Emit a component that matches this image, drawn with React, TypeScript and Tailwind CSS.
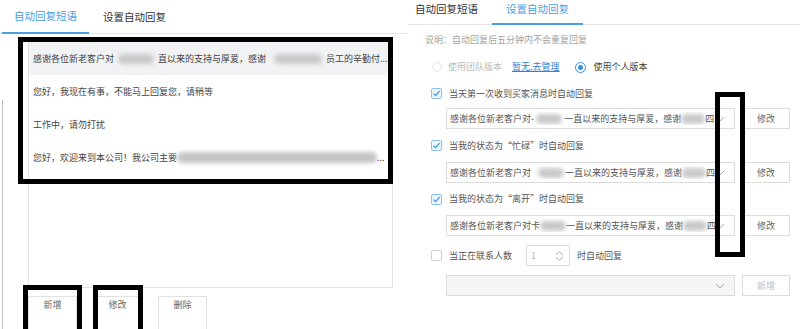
import React from 'react';

const Blur = ({ w, h = 10, c = '#c9c9c9' }: { w: number; h?: number; c?: string }) => (
    <span
        className="inline-block rounded-full blur-[2px] align-middle shrink-0"
        style={{ width: w, height: h, background: c }}
    />
);

const Check = ({ checked = false }: { checked?: boolean }) => (
    <span
        className={
            'flex items-center justify-center w-[11px] h-[11px] rounded-[2px] border ' +
            (checked ? 'border-[#8ec1ea] bg-[#eef6fd]' : 'border-[#cfcfcf] bg-white')
        }
    >
        {checked && (
            <svg width="9" height="9" viewBox="0 0 9 9" fill="none">
                <path d="M1.5 4.6 L3.6 6.6 L7.6 2.2" stroke="#3a8fd8" strokeWidth="1.2" />
            </svg>
        )}
    </span>
);

const Chevron = () => (
    <svg width="10" height="6" viewBox="0 0 10 6" fill="none" className="shrink-0">
        <path d="M1 1 L5 5 L9 1" stroke="#a9a9a9" strokeWidth="1" />
    </svg>
);

function SelectRow({ disabled = false, btn, children }: { disabled?: boolean; btn: string; children?: React.ReactNode }) {
    return (
        <div className="flex items-center h-[21px] ml-[38px]">
            <div
                className={
                    'flex items-center w-[289px] h-[21px] border border-[#dcdcdc] pl-[3px] pr-[9px] ' +
                    (disabled ? 'bg-[#f5f5f5]' : 'bg-white')
                }
            >
                <div className="flex-1 flex items-center overflow-hidden whitespace-nowrap text-[9px] text-[#555]">
                    {children}
                </div>
                <Chevron />
            </div>
            <button
                className={
                    'ml-[7px] w-[48px] h-[21px] border border-[#dcdcdc] bg-white text-[9px] ' +
                    (disabled ? 'text-[#c0c0c0]' : 'text-[#666]')
                }
            >
                {btn}
            </button>
        </div>
    );
}

function CheckRow({ h, checked, label }: { h: number; checked: boolean; label: string }) {
    return (
        <div className="flex items-center gap-[7px] pl-[23px]" style={{ height: h }}>
            <Check checked={checked} />
            <span className="text-[9px] text-[#555]">{label}</span>
        </div>
    );
}

function LeftPanel() {
    const rows: React.ReactNode[] = [
        <>
            感谢各位新老客户对<span className="w-[4px]" /><Blur w={36} /><span className="w-[4px]" />直以来的支持与厚爱，感谢<span className="w-[8px]" /><Blur w={48} /><span className="w-[4px]" />员工的辛勤付...
        </>,
        <>您好，我现在有事，不能马上回复您，请稍等</>,
        <>工作中，请勿打扰</>,
        <>
            您好，欢迎来到本公司！我公司主要<Blur w={200} h={11} c="#c4c4c4" />...
        </>,
    ];
    return (
        <div className="w-[400px] h-full flex flex-col">
            <div className="flex h-[34px] border-b border-[#e6e6e6] pl-[2px]">
                <div className="w-[87px] h-[34px] -mb-px border-b-2 border-[#4aa0df] flex items-center justify-center text-[10.5px] text-[#4aa0df]">
                    自动回复短语
                </div>
                <div className="w-[91px] h-[33px] flex items-center justify-center text-[10.5px] text-[#333]">
                    设置自动回复
                </div>
            </div>
            <div className="flex flex-1">
                <div className="w-[3px] mt-[66px] border-r border-[#bdbdbd]" />
                <div className="flex flex-col ml-[25px]">
                    <div className="mt-[7px] w-[365px] h-[247px] border border-[#e3e3e3] flex flex-col">
                        {rows.map((r, i) => (
                            <div
                                key={i}
                                className={
                                    'h-[33px] px-[4px] flex items-center whitespace-nowrap overflow-hidden text-[9px] text-[#444] ' +
                                    (i === 0 ? 'bg-[#f1f2f4]' : '')
                                }
                            >
                                {r}
                            </div>
                        ))}
                    </div>
                    <div className="flex gap-[16px] mt-[8px]">
                        {['新增', '修改', '删除'].map(b => (
                            <button
                                key={b}
                                className="w-[49px] h-[34px] border border-[#e0e0e0] bg-white text-[9px] text-[#666] flex justify-center pt-[1px]"
                            >
                                {b}
                            </button>
                        ))}
                    </div>
                </div>
            </div>
        </div>
    );
}

function RightPanel() {
    return (
        <div className="w-[400px] h-full flex">
            <div className="w-[8px] h-[34px] border-b border-[#e6e6e6]" />
            <div className="flex-1 flex flex-col">
                <div className="flex h-[25px] border-b border-[#e6e6e6]">
                    <div className="w-[84px] pl-[7px] pt-[1px] text-[10.5px] text-[#333]">自动回复短语</div>
                    <div className="w-[91px] h-[25px] -mb-px border-b-2 border-[#4aa0df] pt-[1px] text-center text-[10.5px] text-[#4aa0df]">
                        设置自动回复
                    </div>
                </div>
                <div className="h-[30px] flex items-center pl-[17px] text-[9px] text-[#a3a3a3]">
                    说明：自动回复后五分钟内不会重复回复
                </div>
                <div className="h-[24px] flex items-center pl-[24px] text-[9px]">
                    <span className="w-[10px] h-[10px] rounded-full border border-[#e3e3e3]" />
                    <span className="ml-[6px] text-[#bcbcbc]">使用团队版本</span>
                    <span className="ml-[10px] text-[#2f83d3] underline">暂无,去管理</span>
                    <span className="ml-[15px] w-[11px] h-[11px] rounded-full border border-[#3a8fd8] flex items-center justify-center">
                        <span className="w-[5px] h-[5px] rounded-full bg-[#3a8fd8]" />
                    </span>
                    <span className="ml-[8px] text-[#444]">使用个人版本</span>
                </div>
                <CheckRow h={29} checked label="当天第一次收到买家消息时自动回复" />
                <SelectRow btn="修改">
                    感谢各位新老客户对-<span className="w-[2px]" /><Blur w={26} /><span className="w-[2px]" />一直以来的支持与厚爱，感谢<Blur w={24} />四
                </SelectRow>
                <CheckRow h={33} checked label="当我的状态为“忙碌”时自动回复" />
                <SelectRow btn="修改">
                    感谢各位新老客户对<span className="w-[14px]" /><Blur w={26} /><span className="w-[2px]" />一直以来的支持与厚爱，感谢<Blur w={24} />四
                </SelectRow>
                <CheckRow h={32} checked label="当我的状态为“离开”时自动回复" />
                <SelectRow btn="修改">
                    感谢各位新老客户对卡<Blur w={26} /><span className="w-[2px]" />一直以来的支持与厚爱，感谢<Blur w={24} />四
                </SelectRow>
                <div className="h-[39px] flex items-center pl-[23px] text-[9px] text-[#555]">
                    <Check />
                    <span className="ml-[7px]">当正在联系人数</span>
                    <div className="ml-[14px] w-[44px] h-[21px] border border-[#dcdcdc] flex items-center justify-between pl-[4px] pr-[5px] text-[#b5b5b5]">
                        <span>1</span>
                        <svg width="9" height="12" viewBox="0 0 9 12" fill="none">
                            <path d="M1 5 L4.5 1.5 L8 5" stroke="#b0b0b0" strokeWidth="1" />
                            <path d="M1 7 L4.5 10.5 L8 7" stroke="#b0b0b0" strokeWidth="1" />
                        </svg>
                    </div>
                    <span className="ml-[7px]">时自动回复</span>
                </div>
                <SelectRow disabled btn="新增" />
            </div>
        </div>
    );
}

export default function App() {
    return (
        <div
            className="relative w-[800px] h-[329px] overflow-hidden bg-white flex"
            style={{ fontFamily: '"Noto Sans CJK SC", "Noto Sans", sans-serif' }}
        >
            <LeftPanel />
            <RightPanel />
            {/* annotation boxes drawn over the screenshot */}
            <div className="absolute left-[18px] top-[37px] w-[375px] h-[147px] border-[5px] border-black pointer-events-none" />
            <div className="absolute left-[23px] top-[285px] w-[59px] h-[60px] border-[5px] border-black pointer-events-none" />
            <div className="absolute left-[93px] top-[285px] w-[50px] h-[60px] border-[5px] border-black pointer-events-none" />
            <div className="absolute left-[715px] top-[92px] w-[30px] h-[165px] border-[5px] border-black pointer-events-none" />
        </div>
    );
}
